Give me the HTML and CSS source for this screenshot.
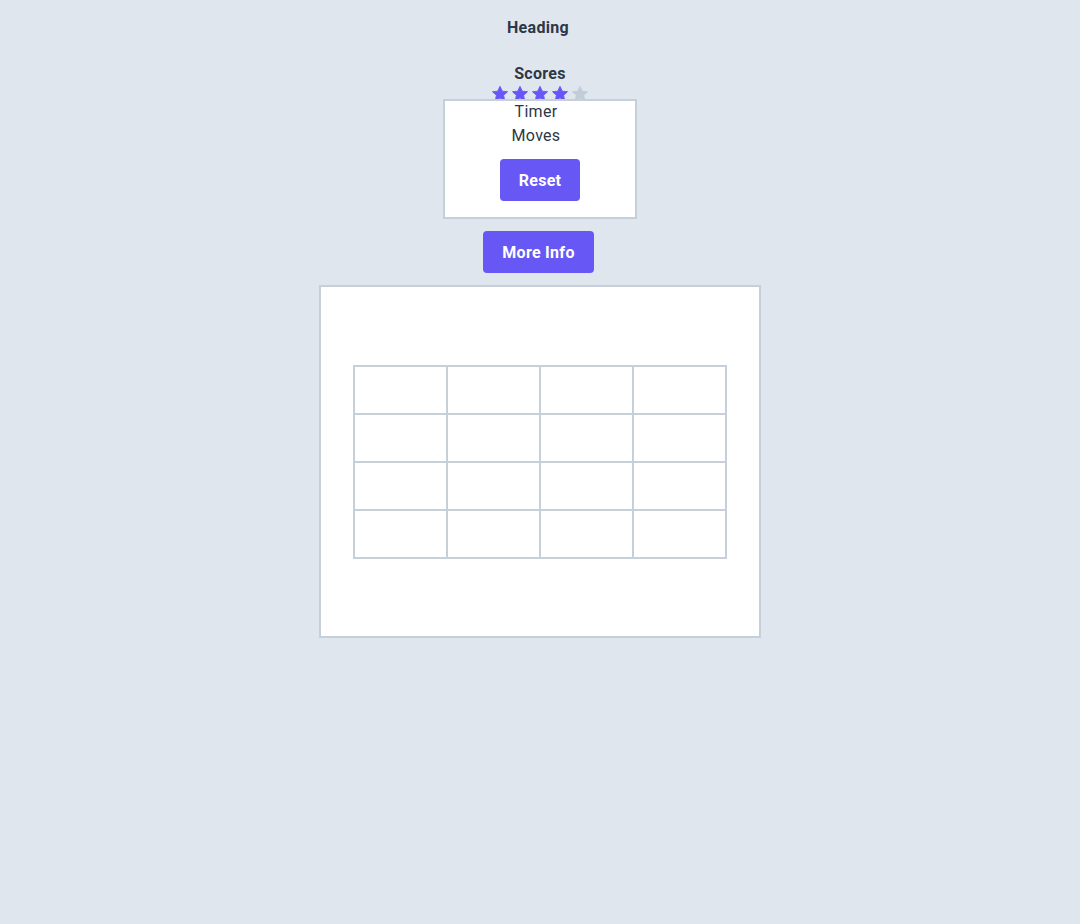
FILE: index.html
```html
<!DOCTYPE html>
<html>
<head>
<meta charset="utf-8">
<link rel="stylesheet" href="styles.css">
</head>
<body>
<main class="page">
  <h1 class="heading">Heading</h1>
  <section class="scores">
    <h2 class="scores-title">Scores</h2>
    <div class="stars">
      <svg class="star on" viewBox="0 0 24 24"><path d="M12 1.8l3 6.4 7 .8-5.2 4.7 1.5 7L12 17.2l-6.3 3.5 1.5-7L2 9l7-.8z" stroke-linejoin="round"/></svg>
      <svg class="star on" viewBox="0 0 24 24"><path d="M12 1.8l3 6.4 7 .8-5.2 4.7 1.5 7L12 17.2l-6.3 3.5 1.5-7L2 9l7-.8z" stroke-linejoin="round"/></svg>
      <svg class="star on" viewBox="0 0 24 24"><path d="M12 1.8l3 6.4 7 .8-5.2 4.7 1.5 7L12 17.2l-6.3 3.5 1.5-7L2 9l7-.8z" stroke-linejoin="round"/></svg>
      <svg class="star on" viewBox="0 0 24 24"><path d="M12 1.8l3 6.4 7 .8-5.2 4.7 1.5 7L12 17.2l-6.3 3.5 1.5-7L2 9l7-.8z" stroke-linejoin="round"/></svg>
      <svg class="star off" viewBox="0 0 24 24"><path d="M12 1.8l3 6.4 7 .8-5.2 4.7 1.5 7L12 17.2l-6.3 3.5 1.5-7L2 9l7-.8z" stroke-linejoin="round"/></svg>
    </div>
    <div class="panel">
      <div class="stat">Timer</div>
      <div class="stat">Moves</div>
      <button class="btn">Reset</button>
    </div>
  </section>
  <button class="btn more">More Info</button>
  <div class="board">
    <div class="grid">
      <div class="cell"></div><div class="cell"></div><div class="cell"></div><div class="cell"></div>
      <div class="cell"></div><div class="cell"></div><div class="cell"></div><div class="cell"></div>
      <div class="cell"></div><div class="cell"></div><div class="cell"></div><div class="cell"></div>
      <div class="cell"></div><div class="cell"></div><div class="cell"></div><div class="cell"></div>
    </div>
  </div>
</main>
</body>
</html>
```

FILE: styles.css
```css
* { box-sizing: border-box; }
html, body {
  margin: 0;
  padding: 0;
  background: #dfe6ee;
  font-family: Roboto, "Liberation Sans", sans-serif;
  color: #2d3748;
}
.page {
  display: flex;
  flex-direction: column;
  align-items: center;
  padding-top: 18px;
}
.heading {
  margin: 0 4px 0 0;
  font-size: 16px;
  line-height: 20px;
  font-weight: 700;
  letter-spacing: 0.3px;
}
.scores {
  display: flex;
  flex-direction: column;
  align-items: center;
  margin-top: 26px;
}
.scores-title {
  margin: 0;
  font-size: 16px;
  line-height: 20px;
  font-weight: 700;
  letter-spacing: 0.3px;
}
.stars {
  display: flex;
  gap: 2px;
  height: 14px;
  margin-top: 1px;
}
.star {
  width: 18px;
  height: 18px;
  display: block;
  flex: none;
  stroke-width: 1.2;
}
.star.on { fill: #6757f5; stroke: #6757f5; }
.star.off { fill: #c2ccd8; stroke: #c2ccd8; }
.panel {
  position: relative;
  width: 194px;
  height: 120px;
  background: #fff;
  border: 2px solid #c5d0da;
  display: flex;
  flex-direction: column;
  align-items: center;
  padding-top: 0;
}
.stat {
  font-size: 16px;
  line-height: 24px;
  margin-right: 8px;
  margin-top: -1px;
  margin-bottom: 1px;
  letter-spacing: 0.3px;
}
.btn {
  font-family: inherit;
  font-size: 16px;
  font-weight: 700;
  letter-spacing: 0.3px;
  color: #fff;
  background: #6757f5;
  border: none;
  border-radius: 4px;
  height: 42px;
  padding: 0 19px;
  cursor: pointer;
}
.panel .btn { margin-top: 10px; }
.more {
  margin: 12px 3px 0 0;
}
.board {
  margin-top: 12px;
  width: 442px;
  height: 353px;
  background: #fff;
  border: 2px solid #c5d0da;
  display: flex;
  align-items: center;
  justify-content: center;
}
.grid {
  display: grid;
  grid-template-columns: repeat(4, 93px);
  grid-template-rows: repeat(4, 48px);
  border-left: 2px solid #c5d0da;
  border-top: 2px solid #c5d0da;
}
.cell {
  border-right: 2px solid #c5d0da;
  border-bottom: 2px solid #c5d0da;
}
```
